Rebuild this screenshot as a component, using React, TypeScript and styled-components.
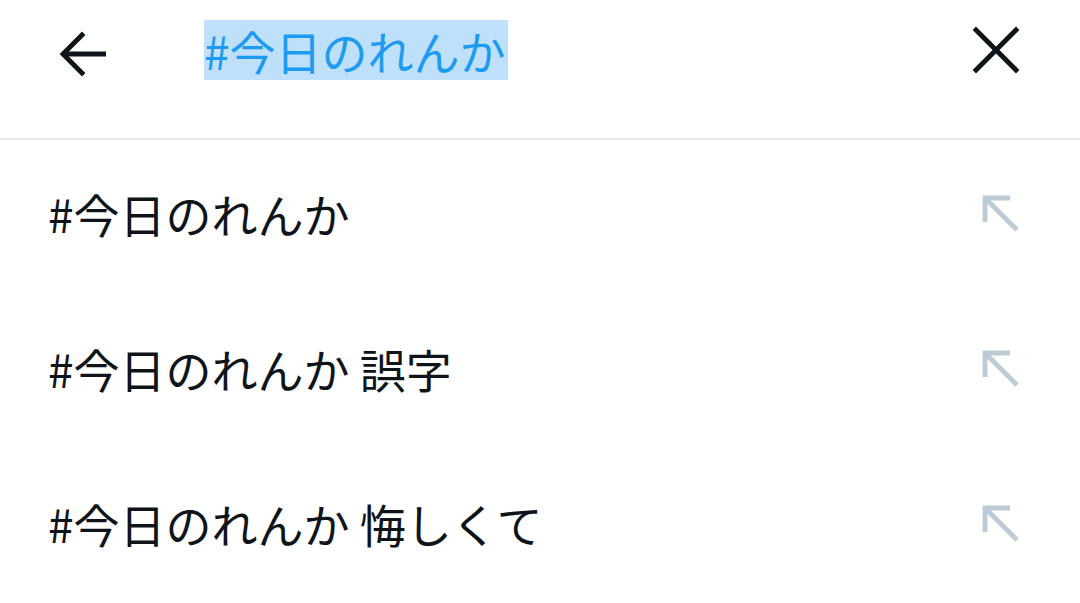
import styled, { createGlobalStyle } from 'styled-components';

const GlobalStyle = createGlobalStyle`
	body {
		margin: 0;
		background: #fff;
		font-family: 'Noto Sans CJK JP', 'Noto Sans', sans-serif;
	}
`;

const suggestions = ['#今日のれんか', '#今日のれんか 誤字', '#今日のれんか 悔しくて'];

const App = () => {
	return (
		<Page>
			<GlobalStyle />
			<Header>
				<IconButton $shift={4}>
					<svg width="50" height="50" viewBox="0 0 50 50" fill="none" stroke="#0f1419" strokeWidth="4.8">
						<path d="M48 25H5" />
						<path d="M24 6L5 25l19 19" strokeLinecap="square" />
					</svg>
				</IconButton>
				<SearchField>
					<Selected>#今日のれんか</Selected>
				</SearchField>
				<IconButton $shift={0}>
					<svg width="48" height="48" viewBox="0 0 48 48" fill="none" stroke="#0f1419" strokeWidth="4.8" strokeLinecap="square">
						<path d="M4 4l40 40" />
						<path d="M44 4L4 44" />
					</svg>
				</IconButton>
			</Header>
			<List>
				{suggestions.map((s) => (
					<Row key={s}>
						<RowText>{s}</RowText>
						<ArrowIcon width="38" height="38" viewBox="0 0 38 38" fill="none" stroke="#bccbd4" strokeWidth="4.8">
							<path d="M3 27V3h25" />
							<path d="M3 3l32 32" />
						</ArrowIcon>
					</Row>
				))}
			</List>
		</Page>
	);
};

export default App;

const Page = styled.div`
	width: 1080px;
	height: 603px;
	overflow: hidden;
	background: #fff;
`;

const Header = styled.div`
	display: flex;
	align-items: center;
	box-sizing: border-box;
	height: 140px;
	padding: 0 60px 38px 58px;
	border-bottom: 2px solid #e6eaed;
`;

const IconButton = styled.div<{ $shift: number }>`
	display: flex;
	align-items: center;
	justify-content: center;
	padding-top: ${(p) => p.$shift * 2}px;
`;

const SearchField = styled.div`
	flex: 1;
	display: flex;
	align-items: center;
	padding-left: 96px;
`;

const Selected = styled.span`
	background: #bfe0fa;
	color: #1d9bf0;
	font-size: 46px;
	line-height: 60px;
	height: 60px;
	display: inline-block;
	padding-right: 2px;
`;

const List = styled.div`
	display: flex;
	flex-direction: column;
`;

const Row = styled.div`
	display: flex;
	align-items: center;
	justify-content: space-between;
	height: 155px;
	padding: 0 58px 10px 48px;
	box-sizing: border-box;
`;

const RowText = styled.span`
	font-size: 46px;
	color: #0f1419;
	line-height: 60px;
`;

const ArrowIcon = styled.svg`
	margin-right: 2px;
	margin-top: 2px;
`;
